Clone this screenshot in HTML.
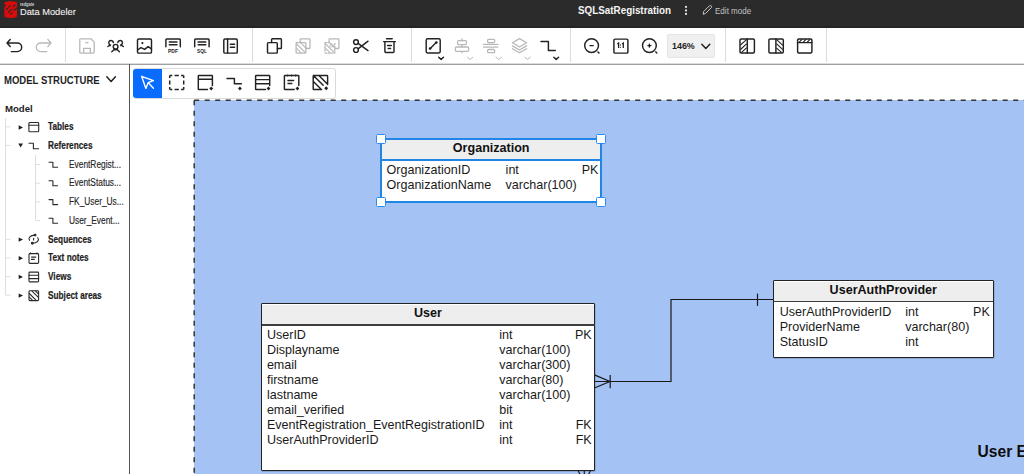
<!DOCTYPE html><html><head><meta charset="utf-8"><style>
*{box-sizing:border-box;margin:0;padding:0}
html,body{width:1024px;height:474px;overflow:hidden;background:#fff;font-family:"Liberation Sans",sans-serif}
.a{position:absolute}
.t{position:absolute;white-space:nowrap}
svg.ov{position:absolute;left:0;top:0;width:1024px;height:474px;overflow:visible}
.k{stroke:#222;fill:none;stroke-width:1.45;stroke-linecap:round;stroke-linejoin:round}
.g{stroke:#b8b8b8;fill:none;stroke-width:1.3;stroke-linecap:round;stroke-linejoin:round}
</style></head><body>
<div class="a" style="left:0;top:0;width:1024px;height:28px;background:#2b2b2b;border-bottom:2px solid #252525"></div>
<div class="a" style="left:0;top:28px;width:1024px;height:37px;background:#fff;border-bottom:1px solid #a0a0a0"></div>
<div class="a" style="left:0;top:63px;width:1024px;height:1px;background:#dcdcdc"></div>
<div class="a" style="left:65px;top:28px;width:1px;height:33.6px;background:#dcdcdc"></div>
<div class="a" style="left:252px;top:28px;width:1px;height:33.6px;background:#dcdcdc"></div>
<div class="a" style="left:411px;top:28px;width:1px;height:33.6px;background:#dcdcdc"></div>
<div class="a" style="left:570px;top:28px;width:1px;height:33.6px;background:#dcdcdc"></div>
<div class="a" style="left:725px;top:28px;width:1px;height:33.6px;background:#dcdcdc"></div>
<div class="a" style="left:826px;top:28px;width:1px;height:33.6px;background:#dcdcdc"></div>
<div class="a" style="left:129px;top:64px;width:1px;height:410px;background:#555"></div>
<div class="a" style="left:194px;top:100px;width:830px;height:374px;background:#a4c2f4"></div>
<div class="a" style="left:133px;top:68px;width:203px;height:30.5px;background:#fff;border:1px solid #dadada;border-radius:3px"></div>
<div class="a" style="left:133.3px;top:68.8px;width:29px;height:29px;background:#0a6cff;border-radius:3px 0 0 3px"></div>
<div class="a" style="left:667px;top:34.3px;width:48px;height:23.4px;background:#f0f0f0;border:1px solid #e4e4e4;border-radius:2px"></div>
<div class="t" style="left:19.70px;top:6.72px;font-size:9.9px;line-height:9.9px;font-weight:normal;color:#f2f2f2;-webkit-text-stroke:0.1px #f2f2f2;transform:scaleX(0.94);transform-origin:0 0;">Data Modeler</div>

<div class="t" style="left:19.50px;top:2.61px;font-size:4.6px;line-height:4.6px;font-weight:bold;color:#d0d0d0;transform:scaleX(0.85);transform-origin:0 0;">redgate</div>

<div class="t" style="left:578.30px;top:5.58px;font-size:10.3px;line-height:10.3px;font-weight:bold;color:#f4f4f4;transform:scaleX(0.956);transform-origin:0 0;">SQLSatRegistration</div>

<div class="t" style="left:714.70px;top:6.80px;font-size:9.1px;line-height:9.1px;font-weight:normal;color:#c2c2c2;transform:scaleX(0.885);transform-origin:0 0;">Edit mode</div>

<div class="t" style="left:672.40px;top:41.20px;font-size:9.8px;line-height:9.8px;font-weight:bold;color:#1f1f1f;transform:scaleX(0.91);transform-origin:0 0;">146%</div>

<div class="t" style="left:4.40px;top:74.60px;font-size:10.75px;line-height:10.75px;font-weight:bold;color:#1e1e1e;transform:scaleX(0.887);transform-origin:0 0;">MODEL STRUCTURE</div>

<div class="t" style="left:4.60px;top:103.90px;font-size:9.8px;line-height:9.8px;font-weight:bold;color:#1e1e1e;transform:scaleX(0.98);transform-origin:0 0;">Model</div>

<div class="t" style="left:48.20px;top:122.13px;font-size:10.0px;line-height:10.0px;font-weight:bold;color:#1e1e1e;-webkit-text-stroke:0.2px #1e1e1e;transform:scaleX(0.826);transform-origin:0 0;">Tables</div>

<div class="t" style="left:48.20px;top:140.84px;font-size:10.0px;line-height:10.0px;font-weight:bold;color:#1e1e1e;-webkit-text-stroke:0.2px #1e1e1e;transform:scaleX(0.826);transform-origin:0 0;">References</div>

<div class="t" style="left:68.60px;top:159.73px;font-size:10.0px;line-height:10.0px;font-weight:normal;color:#262626;-webkit-text-stroke:0.15px #262626;transform:scaleX(0.835);transform-origin:0 0;">EventRegist...</div>

<div class="t" style="left:68.60px;top:178.33px;font-size:10.0px;line-height:10.0px;font-weight:normal;color:#262626;-webkit-text-stroke:0.15px #262626;transform:scaleX(0.835);transform-origin:0 0;">EventStatus...</div>

<div class="t" style="left:68.60px;top:197.03px;font-size:10.0px;line-height:10.0px;font-weight:normal;color:#262626;-webkit-text-stroke:0.15px #262626;transform:scaleX(0.835);transform-origin:0 0;">FK_User_Us...</div>

<div class="t" style="left:68.60px;top:215.73px;font-size:10.0px;line-height:10.0px;font-weight:normal;color:#262626;-webkit-text-stroke:0.15px #262626;transform:scaleX(0.835);transform-origin:0 0;">User_Event...</div>

<div class="t" style="left:48.20px;top:234.64px;font-size:10.0px;line-height:10.0px;font-weight:bold;color:#1e1e1e;-webkit-text-stroke:0.2px #1e1e1e;transform:scaleX(0.826);transform-origin:0 0;">Sequences</div>

<div class="t" style="left:48.20px;top:253.23px;font-size:10.0px;line-height:10.0px;font-weight:bold;color:#1e1e1e;-webkit-text-stroke:0.2px #1e1e1e;transform:scaleX(0.826);transform-origin:0 0;">Text notes</div>

<div class="t" style="left:48.20px;top:271.94px;font-size:10.0px;line-height:10.0px;font-weight:bold;color:#1e1e1e;-webkit-text-stroke:0.2px #1e1e1e;transform:scaleX(0.826);transform-origin:0 0;">Views</div>

<div class="t" style="left:48.20px;top:290.54px;font-size:10.0px;line-height:10.0px;font-weight:bold;color:#1e1e1e;-webkit-text-stroke:0.2px #1e1e1e;transform:scaleX(0.826);transform-origin:0 0;">Subject areas</div>

<div class="a" style="left:380.00px;top:137.90px;width:222.10px;height:65.10px;background:#fff;border:2px solid #1f86e8;"></div><div class="a" style="left:382.00px;top:139.90px;width:218.10px;height:20.10px;background:#eeeeee"></div><div class="a" style="left:381.00px;top:159.00px;width:220.10px;height:2px;background:#1f86e8"></div>
<div class="a" style="left:376.25px;top:134.15px;width:9.5px;height:9.5px;background:#fff;border:1.2px solid #2a8cf0;border-radius:1.5px"></div>
<div class="a" style="left:596.35px;top:134.15px;width:9.5px;height:9.5px;background:#fff;border:1.2px solid #2a8cf0;border-radius:1.5px"></div>
<div class="a" style="left:376.25px;top:197.25px;width:9.5px;height:9.5px;background:#fff;border:1.2px solid #2a8cf0;border-radius:1.5px"></div>
<div class="a" style="left:596.35px;top:197.25px;width:9.5px;height:9.5px;background:#fff;border:1.2px solid #2a8cf0;border-radius:1.5px"></div>
<div class="a" style="left:260.95px;top:303.45px;width:334.30px;height:167.20px;background:#fff;border:1.3px solid #222222;box-shadow:0.4px 0.4px 0.6px rgba(0,0,0,.3);border-radius:1px;"></div><div class="a" style="left:262.25px;top:304.75px;width:331.70px;height:20.25px;background:#eeeeee"></div><div class="a" style="left:261.60px;top:324.35px;width:333.00px;height:1.3px;background:#3c3c3c"></div>
<div class="a" style="left:772.95px;top:280.35px;width:221.00px;height:77.60px;background:#fff;border:1.3px solid #222222;box-shadow:0.4px 0.4px 0.6px rgba(0,0,0,.3);border-radius:1px;"></div><div class="a" style="left:774.25px;top:281.65px;width:218.40px;height:19.65px;background:#eeeeee"></div><div class="a" style="left:773.60px;top:300.65px;width:219.70px;height:1.3px;background:#3c3c3c"></div>
<div class="t" style="left:191.20px;width:600px;text-align:center;top:141.88px;font-size:12.55px;line-height:12.55px;font-weight:bold;color:#111;">Organization</div>

<div class="t" style="left:386.50px;top:163.68px;font-size:12.55px;line-height:12.55px;font-weight:normal;color:#1a1a1a;">OrganizationID</div>

<div class="t" style="left:505.60px;top:163.68px;font-size:12.55px;line-height:12.55px;font-weight:normal;color:#1a1a1a;">int</div>

<div class="t" style="right:425.60px;top:163.68px;font-size:12.55px;line-height:12.55px;font-weight:normal;color:#1a1a1a;">PK</div>

<div class="t" style="left:386.50px;top:178.78px;font-size:12.55px;line-height:12.55px;font-weight:normal;color:#1a1a1a;">OrganizationName</div>

<div class="t" style="left:505.60px;top:178.78px;font-size:12.55px;line-height:12.55px;font-weight:normal;color:#1a1a1a;">varchar(100)</div>

<div class="t" style="left:128.00px;width:600px;text-align:center;top:306.88px;font-size:12.55px;line-height:12.55px;font-weight:bold;color:#111;">User</div>

<div class="t" style="left:266.90px;top:328.68px;font-size:12.55px;line-height:12.55px;font-weight:normal;color:#1a1a1a;">UserID</div>

<div class="t" style="left:499.30px;top:328.68px;font-size:12.55px;line-height:12.55px;font-weight:normal;color:#1a1a1a;">int</div>

<div class="t" style="right:432.30px;top:328.68px;font-size:12.55px;line-height:12.55px;font-weight:normal;color:#1a1a1a;">PK</div>

<div class="t" style="left:266.90px;top:343.76px;font-size:12.55px;line-height:12.55px;font-weight:normal;color:#1a1a1a;">Displayname</div>

<div class="t" style="left:499.30px;top:343.76px;font-size:12.55px;line-height:12.55px;font-weight:normal;color:#1a1a1a;">varchar(100)</div>

<div class="t" style="left:266.90px;top:358.84px;font-size:12.55px;line-height:12.55px;font-weight:normal;color:#1a1a1a;">email</div>

<div class="t" style="left:499.30px;top:358.84px;font-size:12.55px;line-height:12.55px;font-weight:normal;color:#1a1a1a;">varchar(300)</div>

<div class="t" style="left:266.90px;top:373.92px;font-size:12.55px;line-height:12.55px;font-weight:normal;color:#1a1a1a;">firstname</div>

<div class="t" style="left:499.30px;top:373.92px;font-size:12.55px;line-height:12.55px;font-weight:normal;color:#1a1a1a;">varchar(80)</div>

<div class="t" style="left:266.90px;top:389.00px;font-size:12.55px;line-height:12.55px;font-weight:normal;color:#1a1a1a;">lastname</div>

<div class="t" style="left:499.30px;top:389.00px;font-size:12.55px;line-height:12.55px;font-weight:normal;color:#1a1a1a;">varchar(100)</div>

<div class="t" style="left:266.90px;top:404.08px;font-size:12.55px;line-height:12.55px;font-weight:normal;color:#1a1a1a;">email_verified</div>

<div class="t" style="left:499.30px;top:404.08px;font-size:12.55px;line-height:12.55px;font-weight:normal;color:#1a1a1a;">bit</div>

<div class="t" style="left:266.90px;top:419.16px;font-size:12.55px;line-height:12.55px;font-weight:normal;color:#1a1a1a;">EventRegistration_EventRegistrationID</div>

<div class="t" style="left:499.30px;top:419.16px;font-size:12.55px;line-height:12.55px;font-weight:normal;color:#1a1a1a;">int</div>

<div class="t" style="right:432.30px;top:419.16px;font-size:12.55px;line-height:12.55px;font-weight:normal;color:#1a1a1a;">FK</div>

<div class="t" style="left:266.90px;top:434.24px;font-size:12.55px;line-height:12.55px;font-weight:normal;color:#1a1a1a;">UserAuthProviderID</div>

<div class="t" style="left:499.30px;top:434.24px;font-size:12.55px;line-height:12.55px;font-weight:normal;color:#1a1a1a;">int</div>

<div class="t" style="right:432.30px;top:434.24px;font-size:12.55px;line-height:12.55px;font-weight:normal;color:#1a1a1a;">FK</div>

<div class="t" style="left:583.30px;width:600px;text-align:center;top:283.88px;font-size:12.55px;line-height:12.55px;font-weight:bold;color:#111;">UserAuthProvider</div>

<div class="t" style="left:779.70px;top:306.08px;font-size:12.55px;line-height:12.55px;font-weight:normal;color:#1a1a1a;">UserAuthProviderID</div>

<div class="t" style="left:905.20px;top:306.08px;font-size:12.55px;line-height:12.55px;font-weight:normal;color:#1a1a1a;">int</div>

<div class="t" style="right:34.20px;top:306.08px;font-size:12.55px;line-height:12.55px;font-weight:normal;color:#1a1a1a;">PK</div>

<div class="t" style="left:779.70px;top:321.16px;font-size:12.55px;line-height:12.55px;font-weight:normal;color:#1a1a1a;">ProviderName</div>

<div class="t" style="left:905.20px;top:321.16px;font-size:12.55px;line-height:12.55px;font-weight:normal;color:#1a1a1a;">varchar(80)</div>

<div class="t" style="left:779.70px;top:336.24px;font-size:12.55px;line-height:12.55px;font-weight:normal;color:#1a1a1a;">StatusID</div>

<div class="t" style="left:905.20px;top:336.24px;font-size:12.55px;line-height:12.55px;font-weight:normal;color:#1a1a1a;">int</div>

<div class="t" style="left:977.60px;top:444.09px;font-size:15.6px;line-height:15.6px;font-weight:bold;color:#0d0d0d;">User E</div>

<div class="t" style="left:167.90px;top:48.61px;font-size:5.3px;line-height:5.3px;font-weight:bold;color:#222;transform:scaleX(0.95);transform-origin:0 0;">PDF</div>

<div class="t" style="left:196.60px;top:48.61px;font-size:5.3px;line-height:5.3px;font-weight:bold;color:#222;transform:scaleX(0.9);transform-origin:0 0;">SQL</div>

<svg class="ov" width="1024" height="474" viewBox="0 0 1024 474">
<line x1="194.2" y1="100.3" x2="1030" y2="100.3" stroke="#333" stroke-width="1.5" stroke-dasharray="5 5.5"/>
<line x1="194.2" y1="100.3" x2="194.2" y2="480" stroke="#333" stroke-width="1.5" stroke-dasharray="5 5.5"/>
<g stroke="#dedede" stroke-width="1" fill="none"><path d="M5.5,118 V294.8"/><path d="M35.5,155 V220.1"/>
<path d="M5.5,126.8 H10.5"/>
<path d="M5.5,145.5 H10.5"/>
<path d="M35.5,164.6 H40"/>
<path d="M35.5,183.2 H40"/>
<path d="M35.5,201.9 H40"/>
<path d="M35.5,220.6 H40"/>
<path d="M5.5,239.3 H10.5"/>
<path d="M5.5,257.9 H10.5"/>
<path d="M5.5,276.6 H10.5"/>
<path d="M5.5,295.2 H10.5"/>
</g>
<g stroke="#1a1a1a" stroke-width="1.2" fill="none"><path d="M595,381.5 H671 V299.5 H773"/><path d="M595,375.1 L610,381.5 L595,387.8"/><path d="M610.2,375 V388.3"/><path d="M757.5,293.6 V305.9"/><path d="M578.3,471 L584.3,483 M590.3,471 L584.3,483 M584.3,471 V483"/></g>

<!-- undo/redo -->
<path class="k" d="M10.2,39.4 L7,43 L10.2,46.6 M7.3,43 H17.4 A4.3,4.3 0 0 1 17.4,51.6 H11.3"/>
<path class="g" d="M47.8,39.4 L51,43 L47.8,46.6 M50.7,43 H40.6 A4.3,4.3 0 0 0 40.6,51.6 H46.7"/>
<!-- save -->
<path class="g" d="M80.6,38.8 H90.9 L94.2,42.1 V52.3 Q94.2,53.1 93.4,53.1 H80.6 Q79.8,53.1 79.8,52.3 V39.6 Q79.8,38.8 80.6,38.8 Z M83.6,53 V48.3 H90.4 V53 M85.8,42.6 H88"/>
<!-- collab -->
<g class="k" stroke-width="1.35">
<circle cx="115.6" cy="46.7" r="2.35"/>
<path d="M111.8,51.7 L113.9,49.8 H117.4 L119.4,51.7"/>
<path d="M113.4,42.5 C112.9,40 109.4,39.7 108.8,42.2 C108.6,43.4 109.2,44.5 110,45.1 M110,45.2 L107.9,46.5"/>
<path d="M117.8,42.5 C118.3,40 121.8,39.7 122.4,42.2 C122.6,43.4 122,44.5 121.2,45.1 M121.2,45.2 L123.3,46.5"/>
</g>
<path d="M108.7,45.9 L111.2,44 L110.9,46.3 Z M122.5,45.9 L120,44 L120.3,46.3 Z" fill="#222"/>
<!-- image -->
<rect class="k" x="137.5" y="39" width="14" height="14.1" rx="1.2"/>
<circle cx="142.4" cy="43.1" r="1.1" fill="#222"/>
<path class="k" d="M137.6,50 L141,47.6 L144.6,49.4 L148.2,46.6 L151.4,48.8"/>
<!-- pdf / sql -->
<path class="k" d="M165.9,46.8 V39.7 Q165.9,38.9 166.7,38.9 H179.5 Q180.3,38.9 180.3,39.7 V46.8 M169.3,42 H177 M169.3,44.7 H177"/>
<path class="k" d="M194.7,46.8 V39.7 Q194.7,38.9 195.5,38.9 H208.3 Q209.1,38.9 209.1,39.7 V46.8 M198.1,42 H205.8 M198.1,44.7 H205.8"/>
<!-- book -->
<rect class="k" x="223.8" y="39" width="13.5" height="14.1" rx="1.2"/>
<path class="k" d="M227.6,39 V53 M230.4,44.3 H234.6 M230.4,47.3 H234.6"/>
<!-- copy -->
<path class="k" d="M267.5,43.4 Q267.5,42.6 268.3,42.6 H276.5 Q277.3,42.6 277.3,43.4 V52.3 Q277.3,53.1 276.5,53.1 H268.3 Q267.5,53.1 267.5,52.3 Z"/>
<path class="k" d="M271.6,42.5 V39.6 Q271.6,38.8 272.4,38.8 H280.6 Q281.4,38.8 281.4,39.6 V47.7 Q281.4,48.5 280.6,48.5 H277.4"/>
<!-- disabled copy variants -->
<g class="g">
<path d="M296.1,43.4 Q296.1,42.6 296.9,42.6 H305.1 Q305.9,42.6 305.9,43.4 V52.3 Q305.9,53.1 305.1,53.1 H296.9 Q296.1,53.1 296.1,52.3 Z"/>
<path d="M300.2,42.5 V39.6 Q300.2,38.8 301,38.8 H309.2 Q310,38.8 310,39.6 V47.7 Q310,48.5 309.2,48.5 H306"/>
<path d="M296.6,44 L305.4,52.6 M296.6,48.3 L301,52.7 M300.8,42.9 L305.7,47.8" stroke-width="1.1"/>
<path d="M329.1,42.5 V39.6 Q329.1,38.8 329.9,38.8 H338.1 Q338.9,38.8 338.9,39.6 V47.7 Q338.9,48.5 338.1,48.5 H335"/>
<path d="M325,43.5 V52.3 M325,53.1 H334.8 V43 M325,42.6 H329" stroke-dasharray="1.6 1.4"/>
<path d="M325.6,44 L334.4,52.6 M325.6,48.3 L330,52.7 M329.8,42.9 L334.7,47.8" stroke-width="1.1"/>
<circle cx="331.5" cy="45.5" r="1.6" stroke-width="1"/>
</g>
<!-- scissors -->
<g class="k" stroke-width="1.3">
<circle cx="356" cy="42.1" r="2.4"/>
<circle cx="356" cy="50" r="2.4"/>
<path d="M358.1,43.3 L368,50.6 M358.1,48.8 L368,41.2"/>
</g>
<!-- trash -->
<path class="k" d="M386.6,38.8 H392.2 M383.6,41.6 H395.4 M384.9,41.8 V51.6 Q384.9,52.5 385.8,52.5 H393.1 Q394,52.5 394,51.6 V41.8 M387.6,45.5 H391.3 M388.2,48.5 H390.6" stroke-width="1.35"/>
<!-- resize -->
<rect class="k" x="426.2" y="38.8" width="14" height="14.2" rx="1.4" stroke-width="1.6"/>
<path class="k" d="M430.2,48.4 L436.2,42.6"/>
<circle cx="430.1" cy="48.5" r="1.35" fill="#222"/><circle cx="436.3" cy="42.5" r="1.35" fill="#222"/>
<path class="k" d="M438.7,57.3 L441.1,59.4 L443.5,57.3" stroke-width="1.5"/>
<!-- align center (disabled) -->
<g class="g">
<path d="M462,39 V40.6 M462,44.6 V47 M462,51.3 V52.8"/>
<rect x="457.6" y="40.6" width="8.8" height="4" rx="1"/>
<rect x="455.4" y="47" width="13.2" height="4.3" rx="1"/>
<path d="M467.4,57.2 L470.1,59.5 L472.8,57.2" stroke-width="1"/>
</g>
<!-- distribute (disabled) -->
<g class="g">
<rect x="487.6" y="39.3" width="7" height="3.3" rx="1"/>
<path d="M483.6,44.4 H497.8 M483.6,47.2 H497.8"/>
<rect x="487.6" y="49.5" width="7" height="3.2" rx="1"/>
<path d="M496,57.2 L498.7,59.5 L501.4,57.2" stroke-width="1"/>
</g>
<!-- layers (disabled) -->
<g class="g">
<path d="M519.5,38.6 L526.6,42.8 L519.5,47 L512.4,42.8 Z"/>
<path d="M512.4,45.9 L519.5,50 L526.6,45.9 M512.4,48.7 L519.5,52.8 L526.6,48.7"/>
<path d="M524.9,57.2 L527.6,59.5 L530.3,57.2" stroke-width="1"/>
</g>
<!-- ref line -->
<path class="k" d="M541,41.4 H548.4 V50.4 H555.3" stroke-width="1.6"/>
<path class="k" d="M553.8,57.3 L556.2,59.4 L558.6,57.3" stroke-width="1.5"/>
<!-- zoom out -->
<circle class="k" cx="591.6" cy="45.6" r="6.9" stroke-width="1.4"/>
<path class="k" d="M598,51.9 L599,53 M590,45.6 H593.2" stroke-width="1.6"/>
<!-- 1:1 -->
<rect class="k" x="613.9" y="39.1" width="14" height="14" rx="1.2" stroke-width="1.5"/>
<path d="M617.3,44 L618.6,43.1 V47.9 M622,44 L623.3,43.1 V47.9" stroke="#222" stroke-width="1.3" fill="none"/>
<circle cx="620.5" cy="44.9" r="0.55" fill="#222"/><circle cx="620.5" cy="47.2" r="0.55" fill="#222"/>
<!-- zoom in -->
<circle class="k" cx="649.4" cy="45.6" r="6.9" stroke-width="1.4"/>
<path class="k" d="M655.8,51.9 L656.8,53 M647.9,45.6 H650.9 M649.4,44.1 V47.1" stroke-width="1.5"/>
<!-- zoom dropdown chevron -->
<path class="k" d="M701.8,44.3 L705.8,48.6 L709.8,44.3" stroke-width="1.15"/>
<!-- panel split icons -->
<g class="k" stroke-width="1.4">
<rect x="740" y="38.9" width="14.4" height="14" rx="1.2"/>
<path d="M747.3,38.9 V52.9"/>
<rect x="768.9" y="38.9" width="14.4" height="14" rx="1.2"/>
<path d="M775.9,38.9 V52.9"/>
<rect x="797.6" y="38.9" width="14.3" height="14" rx="1.2"/>
<path d="M797.6,42.6 H811.9"/>
</g>
<g stroke="#222" stroke-width="1.1" fill="none">
<path d="M740.5,45 L746.8,39.4 M740.5,49.5 L746.8,43.6 M741.3,52.6 L746.8,47.6"/>
<path d="M776.4,39.4 L782.8,45.3 M776.4,43.6 L782.8,49.6 M776.4,47.8 L781.6,52.6"/>
<path d="M799,42.4 L802,39.3 M803,42.4 L806,39.3 M807,42.4 L810,39.3"/>
</g>
<!-- model structure chevron -->
<path class="k" d="M106.8,76.8 L111.1,81.6 L115.4,76.8" stroke-width="1.2"/>
<!-- palette icons -->
<path d="M141.6,76.3 L153.4,80.7 L148.2,82.6 L145.9,88.4 Z M148.2,82.6 L153.4,88.2" stroke="#fff" stroke-width="1.35" fill="none" stroke-linejoin="round" stroke-linecap="round"/>
<path d="M169.7,75.5 H172.3 M174.6,75.5 H178.8 M181.1,75.5 H183.7 M169.7,89.5 H172.3 M174.6,89.5 H178.8 M181.1,89.5 H183.7 M169.7,75.5 V78.1 M169.7,80.4 V84.6 M169.7,86.9 V89.5 M183.7,75.5 V78.1 M183.7,80.4 V84.6 M183.7,86.9 V89.5" stroke="#222" stroke-width="1.5" fill="none"/>
<g class="k" stroke-width="1.4">
<path d="M207.5,89.5 H198.9 Q198.3,89.5 198.3,88.9 V76.1 Q198.3,75.5 198.9,75.5 H211.8 Q212.4,75.5 212.4,76.1 V85.4 M198.3,79.3 H212.4"/>
<path d="M227,78.4 H234.4 V83.8 H241.4"/>
<path d="M265.5,89.5 H256.2 Q255.6,89.5 255.6,88.9 V76.1 Q255.6,75.5 256.2,75.5 H269.1 Q269.7,75.5 269.7,76.1 V85.4 M255.6,79.6 H269.7 M255.6,83.8 H269.7"/>
<path d="M294.2,89.5 H285 Q284.4,89.5 284.4,88.9 V76.1 Q284.4,75.5 285,75.5 H298.2 Q298.8,75.5 298.8,76.1 V85.4 M288,80.4 H293.6 M288,83.4 H291.8"/>
<path d="M321.6,89.5 H313.8 Q313.2,89.5 313.2,88.9 V76.1 Q313.2,75.5 313.8,75.5 H327 Q327.6,75.5 327.6,76.1 V84.5 M313.4,75.6 L323.2,85.2 M313.4,81.6 L321.4,89.4 M318.9,75.6 L327.6,84.3"/>
</g>
<g fill="#222">
<path d="M211.2,86.6 L213.1,88.5 L211.2,90.4 L209.3,88.5 Z"/>
<path d="M239.9,86.6 L241.8,88.5 L239.9,90.4 L238,88.5 Z"/>
<path d="M268.5,86.6 L270.4,88.5 L268.5,90.4 L266.6,88.5 Z"/>
<path d="M297.4,86.6 L299.3,88.5 L297.4,90.4 L295.5,88.5 Z"/>
<path d="M326.2,86.2 L328.2,88.2 L326.2,90.2 L324.2,88.2 Z"/>
<circle cx="287.6" cy="75.5" r="0.9"/><circle cx="291.6" cy="75.5" r="0.9"/><circle cx="295.6" cy="75.5" r="0.9"/>
</g>
<!-- tree icons -->
<g transform="translate(0,0.9)">
<g fill="#1e1e1e">
<path d="M18.7,124.4 L23,126.6 L18.7,128.8 Z"/>
<path d="M18.3,142.6 L23,142.6 L20.65,146.6 Z"/>
<path d="M18.7,236.5 L23,238.7 L18.7,240.9 Z"/>
<path d="M18.7,255.2 L23,257.4 L18.7,259.6 Z"/>
<path d="M18.7,273.8 L23,276 L18.7,278.2 Z"/>
<path d="M18.7,292.5 L23,294.7 L18.7,296.9 Z"/>
</g>
<g stroke="#2a2a2a" stroke-width="1.1" fill="none" stroke-linecap="round" stroke-linejoin="round">
<rect x="28.9" y="121.6" width="9.8" height="9.3" rx="0.9"/>
<path d="M28.9,124.3 H38.7"/>
<path d="M29,142.4 H33.4 V147.9 H38.6"/>
<path d="M49,161.3 H52.9 V166.3 H57.6"/>
<path d="M49,179.9 H52.9 V184.9 H57.6"/>
<path d="M49,198.7 H52.9 V203.7 H57.6"/>
<path d="M49,217.4 H52.9 V222.4 H57.6"/>
<path d="M29.5,239.4 C28,236.9 30,234.3 35,234.2 M37.8,236.8 C39.5,239.4 37.5,242.1 32.3,242.3 M33.6,237.3 V239.1"/>
<circle cx="35.1" cy="234.2" r="0.9" fill="#2a2a2a"/><circle cx="32.3" cy="242.3" r="0.9" fill="#2a2a2a"/>
<rect x="29" y="252.7" width="9.6" height="9.8" rx="0.9"/>
<path d="M31.5,256.2 H35.8 M31.5,258.5 H34.3 M30.5,252.7 V251.8 M37,252.7 V251.8"/>
<rect x="29" y="271.2" width="9.6" height="9.8" rx="0.9"/>
<path d="M29,274.4 H38.6 M29,277.7 H38.6"/>
<rect x="29" y="289.9" width="9.6" height="9.8" rx="0.9"/>
<path d="M29.3,292.6 L36.2,299.5 M29.3,296.2 L32.6,299.5 M32,290.2 L38.4,296.4 M35.6,290.2 L38.4,293"/>
</g>
</g>
<!-- header kebab, pencil -->
<g fill="#e8e8e8"><circle cx="686" cy="6.9" r="1.1"/><circle cx="686" cy="10.4" r="1.1"/><circle cx="686" cy="13.9" r="1.1"/></g>
<path d="M703.2,14.3 L703.6,11.6 L709.4,5.8 Q710.4,5 711.3,5.9 Q712.1,6.8 711.3,7.7 L705.5,13.5 Z" stroke="#c8c8c8" stroke-width="1" fill="none" stroke-linejoin="round"/>
<!-- logo -->
<path d="M4.4,3 Q4.4,1.2 10.7,1.2 Q17,1.2 17,3 V16.2 Q17,17.9 10.7,17.9 Q4.4,17.9 4.4,16.2 Z" fill="#dc0a0a"/>
<g stroke="#2b2b2b" stroke-width="1.25" stroke-linecap="round">
<path d="M6.4,9.6 L7.8,8.3 M8.7,7.1 L10.4,5.6 M13.3,6.5 L15,5.1 M8.6,12.2 L11.9,9.1 M13.9,10.4 L16.7,8.1 M10.4,14.4 L12.2,12.8"/>
<path d="M3.8,6.4 L5.6,5" stroke-width="1.4"/>
</g>

</svg>
</body></html>
